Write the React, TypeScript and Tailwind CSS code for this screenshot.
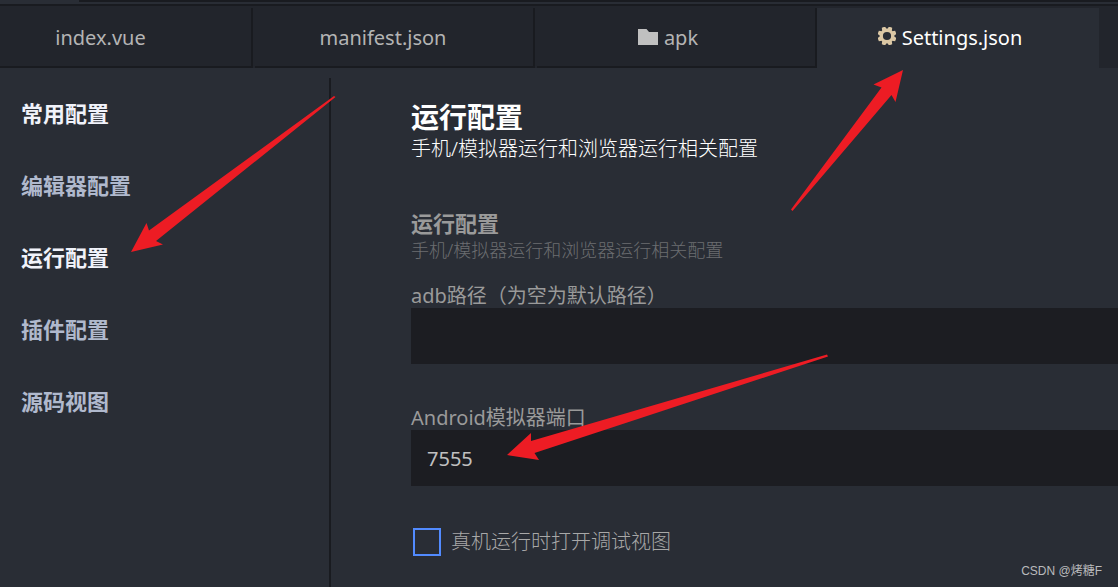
import type { ReactNode } from 'react'

const navItems = [
    { label: '常用配置', className: 'text-[#f0f2fa]' },
    { label: '编辑器配置', className: 'text-[#b0b9cd]' },
    { label: '运行配置', className: 'text-[#f0f2fa]' },
    { label: '插件配置', className: 'text-[#b0b9cd]' },
    { label: '源码视图', className: 'text-[#b0b9cd]' },
]

function FolderIcon() {
    return (
        <svg className="mb-0.5 h-[18px] w-5 shrink-0" viewBox="0 0 20 18" fill="#c0c0c0" aria-hidden="true">
            <path d="M0 1h8.5l2.5 3h9v13H0z" />
        </svg>
    )
}

function GearIcon() {
    return (
        <svg className="mb-1 size-[18px] shrink-0" viewBox="0 0 18 18" aria-hidden="true">
            <circle cx="9" cy="9" r="5.7" fill="none" stroke="#dcc8a5" strokeWidth="3.2" />
            <g fill="#dcc8a5">
                {[22.5, 67.5, 112.5, 157.5, 202.5, 247.5, 292.5, 337.5].map((angle) => (
                    <path key={angle} d="M7.3 -0.5h3.4l0.8 3h-5z" transform={`rotate(${angle} 9 9)`} />
                ))}
            </g>
        </svg>
    )
}

function Tab({ className, children }: { className: string; children: ReactNode }) {
    return (
        <button type="button" role="tab" className={`flex h-full shrink-0 items-center justify-center gap-1.5 ${className}`}>
            {children}
        </button>
    )
}

function Arrows() {
    return (
        <svg className="pointer-events-none absolute inset-0 h-full w-full" fill="#ed1c24" aria-hidden="true">
            <polygon points="131,252 146.5,223 149,230.5 334,96 335.5,97 156,241 163,244.5" />
            <polygon points="903,70 873.5,84.5 881.5,87.5 791,209.5 792.5,211 891.5,95 895.5,102" />
            <polygon points="507,455 531,433 531,441 827,354.5 828,356.5 534.5,453 539,460" />
        </svg>
    )
}

export default function App() {
    return (
        <div className="relative flex min-h-screen flex-col overflow-hidden bg-[#292d35] font-['Noto_Sans','Noto_Sans_CJK_SC',sans-serif] text-xl text-[#9a9a9a]">
            <div className="flex h-0.5">
                <div className="w-[79px]" />
                <div className="flex-1 bg-[#191b20]" />
            </div>
            <div className="mt-0.5 h-0.5 bg-[#191b20]" />
            <div role="tablist" className="flex h-[62px] overflow-hidden bg-[#22252c] pt-0.5 text-[#b4b4b4]">
                <Tab className="w-[253px] border-r-2 border-b-2 border-[#191b20] pt-0.5 pr-[50px]">index.vue</Tab>
                <Tab className="ml-0.5 w-[280px] border-r-2 border-b-2 border-[#191b20] pt-0.5 pr-[22px]">manifest.json</Tab>
                <Tab className="ml-0.5 w-[280px] border-r-2 border-b-2 border-[#191b20] pt-0.5 pr-4">
                    <FolderIcon />
                    apk
                </Tab>
                <Tab className="w-[282px] bg-[#292d35] pr-4 text-white">
                    <GearIcon />
                    Settings.json
                </Tab>
            </div>
            <div className="flex flex-1 pt-2.5">
                <nav className="w-[331px] shrink-0 border-r-2 border-[#191b20] pl-[21px]">
                    {navItems.map((item) => (
                        <a key={item.label} href="#" className={`flex h-[72px] items-center pb-0.5 text-[22px] font-bold ${item.className}`}>
                            {item.label}
                        </a>
                    ))}
                </nav>
                <main className="min-w-0 flex-1 pt-[21px] pl-20">
                    <h1 className="text-[28px] leading-9 font-bold text-white">运行配置</h1>
                    <p className="mt-0.5 leading-6 font-light text-white">手机/模拟器运行和浏览器运行相关配置</p>
                    <h2 className="mt-12 text-[22px] leading-7 font-bold">运行配置</h2>
                    <p className="mt-px text-lg leading-6 font-light text-[#6c6e71]">手机/模拟器运行和浏览器运行相关配置</p>
                    <label htmlFor="adb" className="mt-[22px] block leading-6">adb路径（为空为默认路径）</label>
                    <input id="adb" type="text" className="block h-14 w-full bg-[#1c1d22] px-4 text-[#c0c0c0] outline-none" />
                    <label htmlFor="port" className="mt-[42px] block leading-6">Android模拟器端口</label>
                    <input id="port" type="text" defaultValue="7555" className="block h-14 w-full bg-[#1c1d22] px-4 text-[#c0c0c0] outline-none" />
                    <div className="mt-[42px] flex items-center gap-2.5 pl-0.5">
                        <input id="debug" type="checkbox" className="size-7 shrink-0 appearance-none border-2 border-[#528bff] checked:bg-[#528bff]" />
                        <label htmlFor="debug" className="leading-6 font-light text-[#a8a8a8]">真机运行时打开调试视图</label>
                    </div>
                </main>
            </div>
            <Arrows />
            <div className="absolute right-4 bottom-2 font-['Liberation_Sans','Noto_Sans_CJK_SC',sans-serif] text-xs leading-4 text-[#b9babc]">
                CSDN @烤糖F
            </div>
        </div>
    )
}
